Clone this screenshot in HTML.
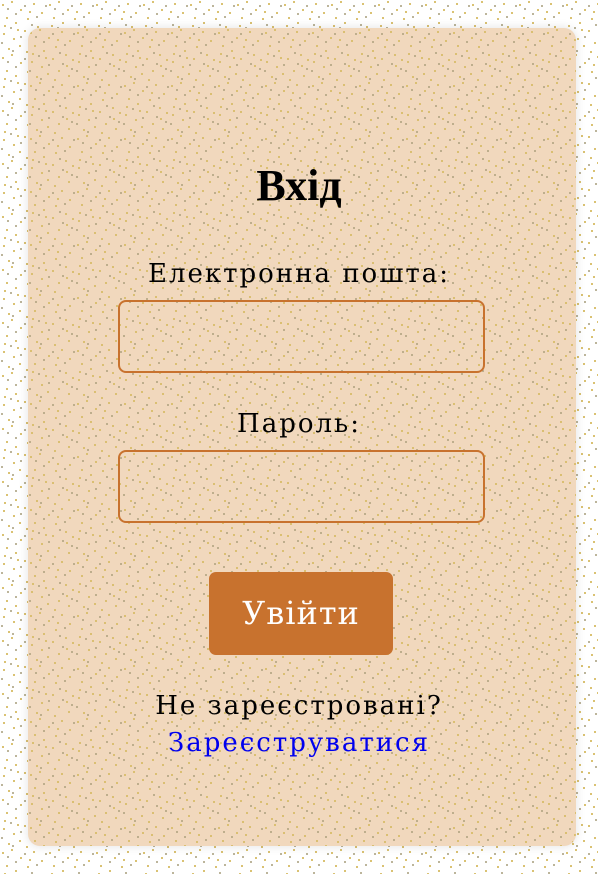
<!DOCTYPE html>
<html><head><meta charset="utf-8"><style>
html,body{margin:0;padding:0;width:598px;height:874px;overflow:hidden;background:#fff;font-family:"DejaVu Serif","Liberation Serif",serif;}
.bg{position:absolute;left:0;top:0}
.card{position:absolute;left:28px;top:28px;width:548px;height:818px;background:#f1d8bd;border-radius:12px;box-shadow:0 0 10px rgba(0,0,0,0.12);overflow:hidden}
.t{position:absolute;left:0;width:598px;text-align:center;color:#000;font-size:26px;letter-spacing:2px}
.inp{position:absolute;left:118px;width:363px;height:69px;border:2px solid #c8722e;border-radius:8px}
.btn{position:absolute;left:209px;top:572px;width:184px;height:83px;background:#c8722e;border-radius:7px;color:#fff;font-size:32px;letter-spacing:1px;text-align:center;line-height:83px}
</style></head><body>
<svg class="bg" width="598" height="874">
<defs>
<pattern id="n" width="47" height="53" patternUnits="userSpaceOnUse">
<g fill="#d4b85a" opacity="0.85">
<rect x="2" y="4" width="2" height="2"/><rect x="11" y="1" width="2" height="2"/><rect x="20" y="9" width="2" height="2"/><rect x="33" y="3" width="2" height="2"/><rect x="41" y="12" width="2" height="2"/>
<rect x="6" y="17" width="2" height="2"/><rect x="15" y="22" width="2" height="2"/><rect x="27" y="18" width="2" height="2"/><rect x="37" y="26" width="2" height="2"/><rect x="44" y="31" width="2" height="2"/>
<rect x="3" y="33" width="2" height="2"/><rect x="13" y="38" width="2" height="2"/><rect x="24" y="30" width="2" height="2"/><rect x="30" y="42" width="2" height="2"/><rect x="40" y="47" width="2" height="2"/>
<rect x="8" y="48" width="2" height="2"/><rect x="19" y="45" width="2" height="2"/><rect x="26" y="51" width="2" height="2"/>
<rect x="29" y="11" width="2" height="2"/><rect x="4" y="25" width="2" height="2"/><rect x="38" y="37" width="2" height="2"/><rect x="17" y="29" width="2" height="2"/>
</g>
<g fill="#9f9670" opacity="0.7">
<rect x="7" y="8" width="2" height="2"/><rect x="24" y="5" width="2" height="2"/><rect x="36" y="16" width="2" height="2"/><rect x="10" y="27" width="2" height="2"/><rect x="20" y="36" width="2" height="2"/><rect x="34" y="35" width="2" height="2"/><rect x="1" y="42" width="2" height="2"/><rect x="43" y="40" width="2" height="2"/><rect x="15" y="13" width="2" height="2"/>
<rect x="31" y="24" width="2" height="2"/><rect x="12" y="50" width="2" height="2"/><rect x="45" y="5" width="2" height="2"/>
</g>
</pattern>
</defs>
<rect width="598" height="874" fill="url(#n)"/>
</svg>
<div class="card">
<svg width="548" height="818"><rect width="548" height="818" fill="url(#n)" opacity="0.9"/></svg>
</div>
<div class="t" style="top:160px;font-size:44px;font-weight:bold;letter-spacing:0;font-family:'Liberation Serif',serif">Вхід</div>
<div class="t" style="top:259px">Електронна пошта:</div>
<div class="inp" style="top:300px"></div>
<div class="t" style="top:409px">Пароль:</div>
<div class="inp" style="top:450px"></div>
<div class="btn">Увійти</div>
<div class="t" style="top:691px">Не зареєстровані?</div>
<div class="t" style="top:728px;color:#0000ee">Зареєструватися</div>
</body></html>
